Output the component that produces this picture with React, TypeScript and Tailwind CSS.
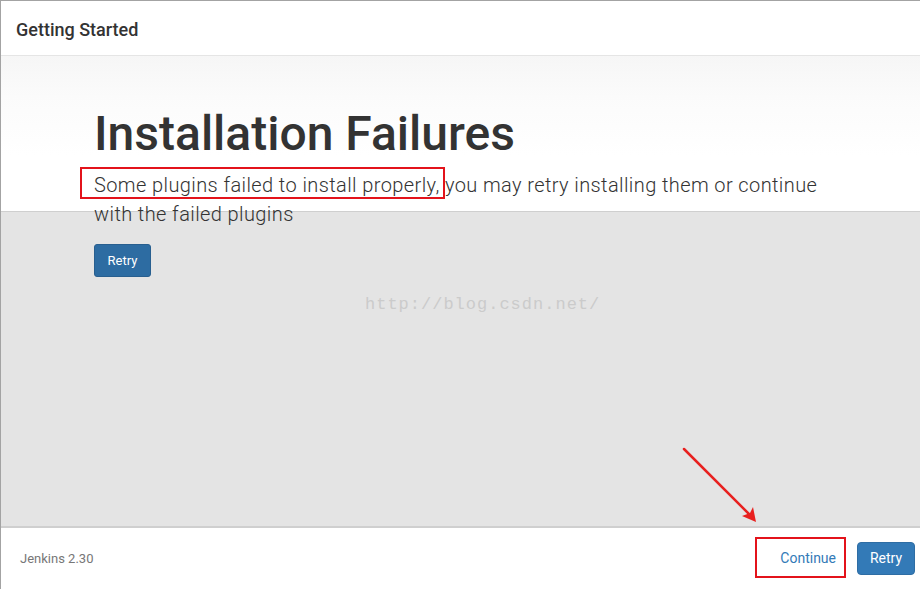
import React from "react";

export default function App() {
  return (
    <div className="relative w-[920px] h-[589px] overflow-hidden bg-white border-t border-l border-[#a3a3a3] flex flex-col font-['Roboto',sans-serif] text-[#333]">
      <header className="h-[55px] shrink-0 border-b border-[#e5e5e5] flex items-center pl-[15px] pt-[3px]">
        <h1 className="text-[18px] font-medium text-[#333] leading-none">Getting Started</h1>
      </header>

      <main className="relative flex-1 pl-[93px] bg-[linear-gradient(180deg,#f6f6f6_0px,#fbfbfb_40px,#ffffff_100px,#ffffff_155px,#cfcfcf_155px,#cfcfcf_156px,#e4e4e4_156px)]">
        <h2 className="mt-[52px] text-[48px] leading-[52px] font-medium text-[#333]">
          Installation Failures
        </h2>
        <p className="mt-[11px] text-[20px] leading-[29px] font-light text-[#333] w-[740px] tracking-[0.4px]">
          <span className="relative">
            Some plugins failed to install properly,
            <span className="absolute -left-[14px] -top-[6px] -bottom-[2px] -right-[5px] border-2 border-[#e3131b]"></span>
          </span>{" "}
          you may retry installing them or continue with the failed plugins
        </p>
        <button className="mt-[15px] w-[57px] h-[33px] rounded-[3px] bg-[#2d6ca2] border border-[#285f8f] text-white text-[13px] font-normal">
          Retry
        </button>
        <div className="absolute left-[364px] top-[236px] font-['Liberation_Mono',monospace] text-[17px] tracking-[1px] text-[#cbcbcb] select-none">
          http://blog.csdn.net/
        </div>
      </main>

      <footer className="h-[63px] shrink-0 border-t-2 border-[#cfcfcf] flex items-center justify-between pl-[19px] pr-[5px]">
        <span className="text-[13px] text-[#777]">Jenkins 2.30</span>
        <div className="flex items-center gap-[9px]">
          <div className="relative">
            <button className="pl-[12px] pr-[12px] h-[33px] text-[14px] text-[#337ab7]">Continue</button>
            <span className="absolute -left-[13px] -top-[5px] -bottom-[3px] right-[2px] border-2 border-[#e3131b]"></span>
          </div>
          <button className="w-[58px] h-[33px] rounded-[4px] bg-[#337ab7] border border-[#2e6da4] text-white text-[14px] font-normal">
            Retry
          </button>
        </div>
      </footer>

      <svg className="absolute left-0 top-0 pointer-events-none" width="920" height="589" viewBox="0 0 920 589">
        <line x1="683" y1="448" x2="750" y2="515" stroke="#e8201f" strokeWidth="2.5" strokeLinecap="round" />
        <polygon points="755,521 741,515 749,512 752,506" fill="#e8201f" />
      </svg>
    </div>
  );
}
